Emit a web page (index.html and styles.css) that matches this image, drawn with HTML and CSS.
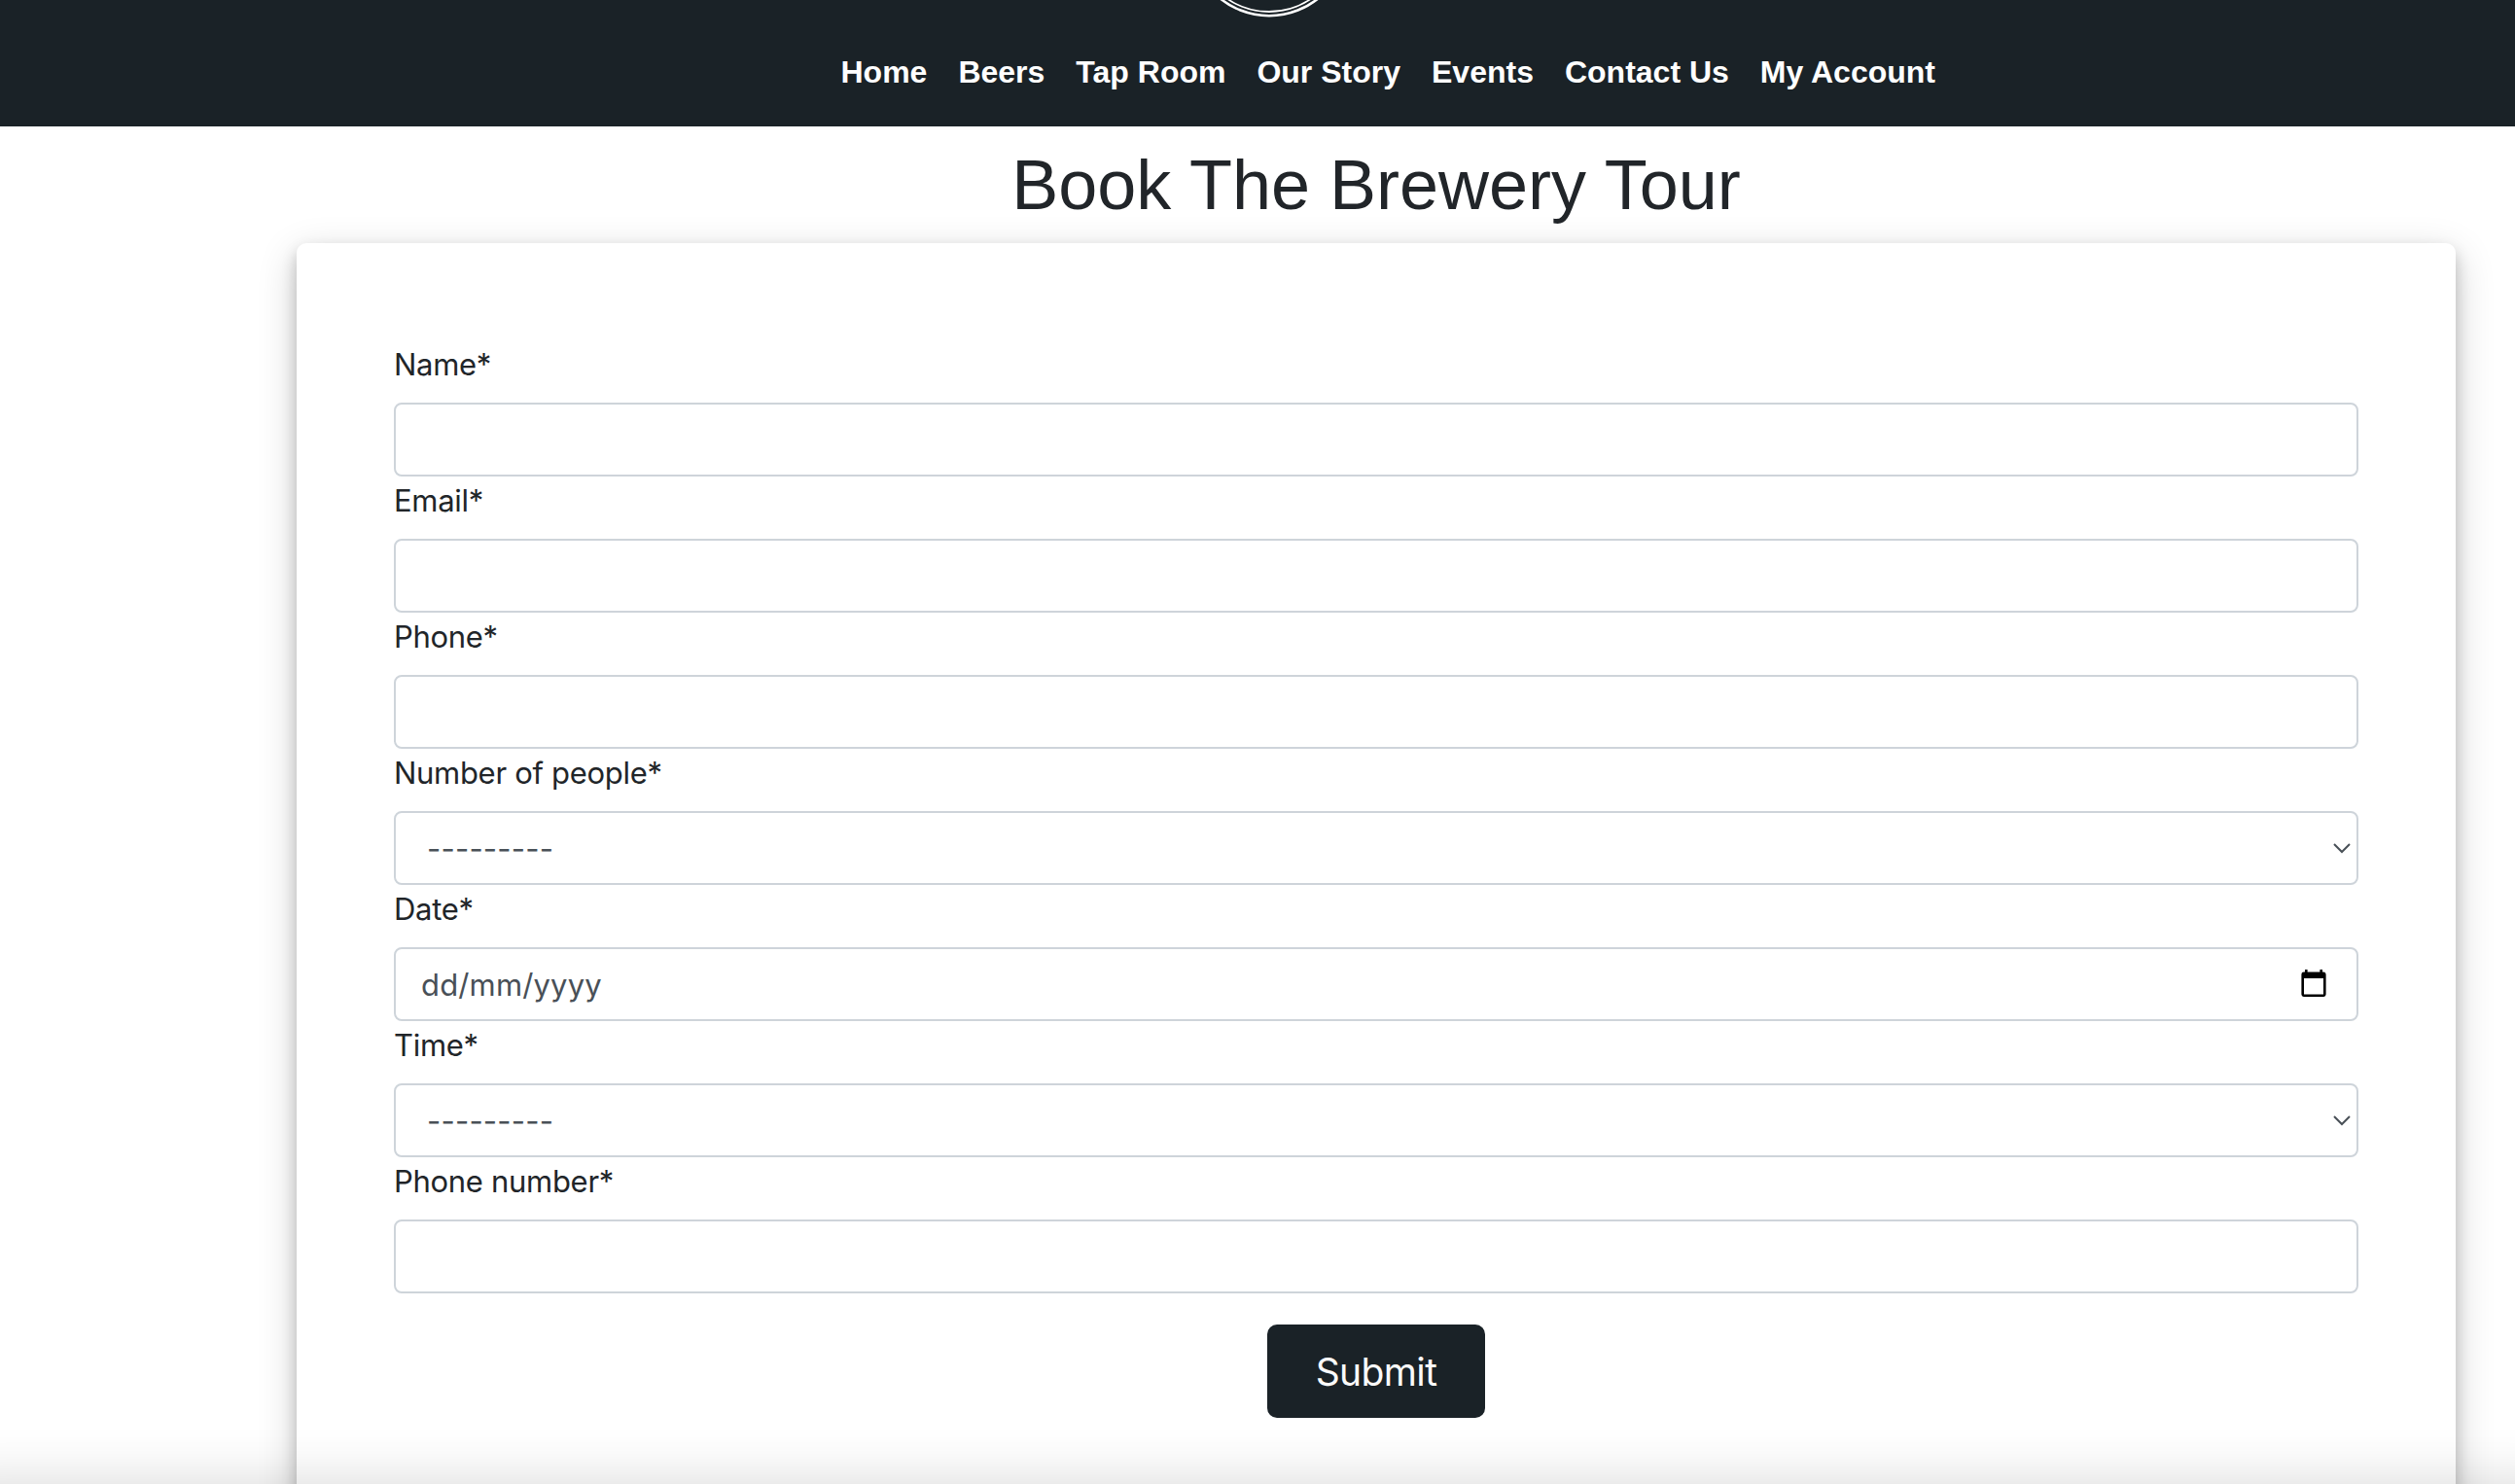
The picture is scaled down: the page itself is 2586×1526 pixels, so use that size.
FILE: index.html
```
<!DOCTYPE html>
<html lang="en">
<head>
<meta charset="utf-8">
<title>Book The Brewery Tour</title>
<link rel="stylesheet" href="styles.css">
</head>
<body>
<header class="header">
  <svg class="logo" width="168" height="20" viewBox="0 0 168 20" fill="none" stroke="#fff">
    <circle cx="84" cy="-64" r="80.2" stroke-width="2.6"/>
    <circle cx="84" cy="-64" r="76" stroke-width="1.9"/>
  </svg>
  <nav class="nav">
    <a>Home</a><a>Beers</a><a>Tap Room</a><a>Our Story</a><a>Events</a><a>Contact Us</a><a>My Account</a>
  </nav>
</header>
<main class="main">
  <h1 class="title">Book The Brewery Tour</h1>
  <form class="card">
    <label class="label" for="name">Name*</label>
    <input class="field" id="name" type="text">
    <label class="label" for="email">Email*</label>
    <input class="field" id="email" type="email">
    <label class="label" for="phone">Phone*</label>
    <input class="field" id="phone" type="text">
    <span class="label">Number of people*</span>
    <div class="field select"><span class="dashes">---------</span>
      <svg width="20" height="12" viewBox="0 0 20 12" fill="none" stroke="#495057" stroke-width="2"><path d="M2 2l8 8 8-8"/></svg>
    </div>
    <span class="label">Date*</span>
    <div class="field date"><span class="date-text">dd/mm/yyyy</span>
      <svg class="calendar" width="26" height="28" viewBox="0 0 26 28"><path fill-rule="evenodd" d="M4 0h2.600v2.600h12.800V0H22v2.600h1.400A2.400 2.400 0 0 1 25.600 5v20.600a2.400 2.400 0 0 1-2.400 2.400H2.800a2.400 2.400 0 0 1-2.400-2.400V5a2.400 2.400 0 0 1 2.400-2.400H4zM3 9v16.500h20V9z"/></svg>
    </div>
    <span class="label">Time*</span>
    <div class="field select"><span class="dashes">---------</span>
      <svg width="20" height="12" viewBox="0 0 20 12" fill="none" stroke="#495057" stroke-width="2"><path d="M2 2l8 8 8-8"/></svg>
    </div>
    <label class="label" for="number">Phone number*</label>
    <input class="field" id="number" type="text">
    <button class="submit" type="button">Submit</button>
  </form>
</main>
<footer class="footer"></footer>
</body>
</html>
```
FILE: styles.css
```
* {
  box-sizing: border-box;
}

body {
  margin: 0;
  height: 1526px;
  overflow: hidden;
  display: flex;
  flex-direction: column;
  background: #fff;
  color: #212529;
  font-family: Inter, "Liberation Sans", sans-serif;
  font-size: 31px;
}

.header {
  flex: none;
  height: 130px;
  background: #1a2227;
}

.logo {
  display: block;
  margin-left: 1221px;
}

.nav {
  display: flex;
  gap: 32px;
  margin: 30px 0 0 864.5px;
  font: bold 32px/48px "Liberation Sans", Arial, sans-serif;
  color: #fff;
  white-space: nowrap;
}

.main {
  flex: none;
  height: 1396px;
  overflow: hidden;
  padding: 17px 61px 0 305px;
}

.title {
  margin: 0;
  height: 103px;
  font: 400 72px/86px "Liberation Sans", Arial, sans-serif;
  text-align: center;
}

.card {
  display: flex;
  flex-direction: column;
  height: 1400px;
  padding: 100px;
  border-radius: 10px;
  background: #fff;
  box-shadow: 0 8px 16px rgba(0, 0, 0, .2), 0 12px 40px rgba(0, 0, 0, .19);
}

.label {
  flex: none;
  height: 48px;
  margin-bottom: 16px;
  padding-top: 1px;
  line-height: 48px;
  letter-spacing: -.3px;
}

.field {
  flex: none;
  display: flex;
  align-items: center;
  justify-content: space-between;
  width: 100%;
  height: 76px;
  padding: 0 26px;
  border: 2px solid #ced4da;
  border-radius: 8px;
  background: #fff;
  color: #495057;
  font: inherit;
}

.select {
  padding: 0 5px 0 32px;
}

.dashes {
  letter-spacing: .2px;
}

.date {
  padding-right: 31px;
}

.date-text {
  letter-spacing: .15px;
}

.calendar {
  margin-bottom: 2px;
}

.submit {
  flex: none;
  align-self: center;
  width: 224px;
  height: 96px;
  margin-top: 32px;
  padding: 2px 0 0;
  border: 0;
  border-radius: 10px;
  background: #1a2227;
  color: #fafafa;
  font: 400 39px/60px Inter, sans-serif;
  letter-spacing: -.6px;
}

/* The footer begins at the fold; its soft shadow rises over the card. */
.footer {
  flex: none;
  position: relative;
  height: 60px;
  background: #1a2227;
  box-shadow: 0 60px 60px 60px rgba(0, 0, 0, .16);
}
```
